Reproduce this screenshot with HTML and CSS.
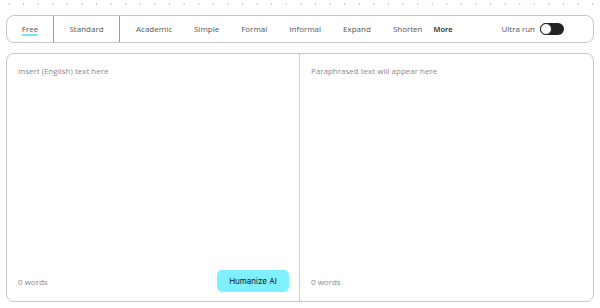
FILE: index.html
```html
<!DOCTYPE html>
<html lang="en">
<head>
  <meta charset="UTF-8" />
  <title>Paraphraser</title>
  <link rel="stylesheet" href="styles.css">
</head>
<body>
  <div class="dots"></div>

  <div class="toolbar">
    <div class="tab first active"><span>Free</span></div>
    <div class="tab std">Standard</div>
    <div class="modes">
      <span>Academic</span>
      <span>Simple</span>
      <span>Formal</span>
      <span>Informal</span>
      <span>Expand</span>
      <span>Shorten</span>
      <span class="more">More</span>
    </div>
    <div class="ultra">
      Ultra run
      <span class="toggle"><span class="knob"></span></span>
    </div>
  </div>

  <div class="editor">
    <div class="pane">
      <div class="hint">Insert (English) text here</div>
      <div class="pane-foot">
        <span class="count">0 words</span>
        <button class="humanize">Humanize AI</button>
      </div>
    </div>
    <div class="pane">
      <div class="hint">Paraphrased text will appear here</div>
      <div class="pane-foot">
        <span class="count">0 words</span>
      </div>
    </div>
  </div>
</body>
</html>
```

FILE: styles.css
```css
body {
  margin: 0;
  padding: 0 6px;
  font-family: 'Open Sans', sans-serif;
  font-size: 8px;
  color: #555;
  background: #fff;
}
.dots {
  height: 15px;
  margin: 0 -6px;
  background-image: radial-gradient(circle, #c4c4c4 0.7px, transparent 0.9px);
  background-size: 14.6px 8px;
  background-position: 1.7px 0;
  background-repeat: repeat-x;
}
.toolbar {
  display: flex;
  align-items: stretch;
  height: 26px;
  border: 1px solid #c6c6c6;
  border-radius: 8px;
}
.tab {
  display: flex;
  align-items: center;
  justify-content: center;
  padding-bottom: 1px;
  border-right: 1px solid #9a9a9a;
}
.tab.first {
  width: 46px;
}
.tab.first span {
  border-bottom: 2px solid #7de6f4;
  padding-bottom: 0;
  margin-top: 2px;
}
.tab.std {
  width: 65px;
}
.modes {
  display: flex;
  align-items: center;
  padding-left: 16px;
  padding-bottom: 1px;
}
.modes span {
  margin-right: 22px;
}
.modes .more {
  color: #222;
  font-weight: 600;
  font-size: 7.5px;
  margin-left: -11px;
}
.ultra {
  margin-left: auto;
  margin-right: 29px;
  display: flex;
  align-items: center;
  gap: 5px;
  padding-bottom: 1px;
}
.toggle {
  width: 24px;
  height: 12px;
  border-radius: 6px;
  background: #222;
  position: relative;
}
.knob {
  position: absolute;
  left: 0;
  top: 0;
  width: 10px;
  height: 10px;
  border: 1px solid #222;
  border-radius: 50%;
  background: #fff;
}
.editor {
  display: grid;
  grid-template-columns: 293px 1fr;
  margin-top: 10px;
  height: 247px;
  border: 1px solid #c6c6c6;
  border-radius: 8px;
}
.pane {
  display: flex;
  flex-direction: column;
  padding: 11px 10px 8px 11px;
}
.pane:first-child {
  border-right: 1px solid #cfcfcf;
}
.hint {
  color: #8a8a8a;
}
.pane-foot {
  margin-top: auto;
  display: flex;
  align-items: center;
  justify-content: space-between;
  height: 22px;
  margin-bottom: 1px;
}
.count {
  color: #8a8a8a;
}
.humanize {
  font-family: Inter, sans-serif;
  font-size: 8px;
  color: #111;
  background: #7ff0ff;
  border: none;
  border-radius: 5px;
  width: 72px;
  height: 22px;
  padding: 0;
}
```
